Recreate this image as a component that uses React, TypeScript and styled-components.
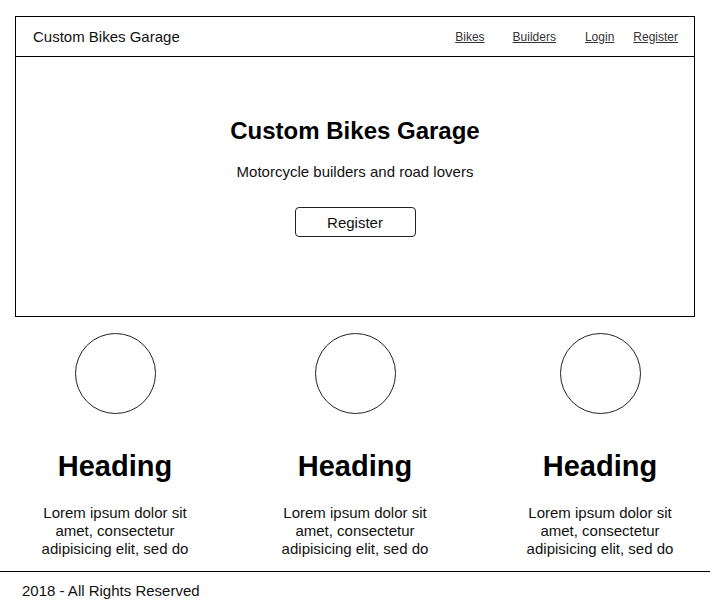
import * as React from 'react';
import styled, { createGlobalStyle } from 'styled-components';

const GlobalStyle = createGlobalStyle`
  body {
    margin: 0;
    background: #fff;
    color: #111;
    font-family: "Liberation Sans", Arial, Helvetica, sans-serif;
  }
`;

const Page = styled('div')`
  padding-top: 16px;
`;

const Frame = styled('div')`
  margin: 0 15px;
  border: 1px solid #000;
`;

const Header = styled('header')`
  height: 39px;
  border-bottom: 1px solid #000;
  display: flex;
  align-items: center;
  justify-content: space-between;
  padding: 0 16px 0 17px;
`;

const Brand = styled('div')`
  font-size: 15px;
  color: #111;
`;

const Nav = styled('nav')`
  display: flex;
  align-items: center;
`;

const NavLink = styled('a')<{ $gap: number }>`
  margin-left: ${(p) => p.$gap}px;
  font-size: 12px;
  color: #333;
  text-decoration: underline;
  cursor: pointer;
`;

const Hero = styled('section')`
  height: 259px;
  display: flex;
  flex-direction: column;
  align-items: center;
  padding-top: 60px;
  box-sizing: border-box;
`;

const HeroTitle = styled('h1')`
  margin: 0;
  font-size: 24px;
  line-height: 28px;
  font-weight: bold;
  color: #000;
`;

const HeroSubtitle = styled('p')`
  margin: 18px 0 0;
  font-size: 15px;
  line-height: 18px;
`;

const HeroButton = styled('button')`
  margin-top: 26px;
  width: 121px;
  height: 30px;
  border: 1px solid #222;
  border-radius: 4px;
  background: #fff;
  font-family: inherit;
  font-size: 15px;
  color: #111;
  cursor: pointer;
`;

const Features = styled('section')`
  display: grid;
  grid-template-columns: 230px 250px 230px;
  padding-top: 16px;
  padding-bottom: 13px;
`;

const Feature = styled('div')<{ $shift: number }>`
  display: flex;
  flex-direction: column;
  align-items: center;
  padding-left: ${(p) => p.$shift}px;
`;

const Circle = styled('div')`
  width: 79px;
  height: 79px;
  border: 1px solid #222;
  border-radius: 50%;
`;

const FeatureHeading = styled('h2')`
  margin: 35px 0 0;
  font-size: 29px;
  line-height: 34px;
  font-weight: bold;
  color: #000;
`;

const FeatureText = styled('p')`
  margin: 21px 0 0;
  max-width: 156px;
  font-size: 15px;
  line-height: 18px;
  text-align: center;
`;

const Footer = styled('footer')`
  border-top: 1px solid #000;
  padding: 10px 22px;
  font-size: 15px;
  line-height: 18px;
`;

const links = [
  { label: 'Bikes', gap: 0 },
  { label: 'Builders', gap: 28 },
  { label: 'Login', gap: 29 },
  { label: 'Register', gap: 19 },
];

const features = [{ shift: 0 }, { shift: 0 }, { shift: 10 }];

const lorem = 'Lorem ipsum dolor sit amet, consectetur adipisicing elit, sed do';

export default function App() {
  return (
    <Page>
      <GlobalStyle />
      <Frame>
        <Header>
          <Brand>Custom Bikes Garage</Brand>
          <Nav>
            {links.map((l) => (
              <NavLink key={l.label} $gap={l.gap}>
                {l.label}
              </NavLink>
            ))}
          </Nav>
        </Header>
        <Hero>
          <HeroTitle>Custom Bikes Garage</HeroTitle>
          <HeroSubtitle>Motorcycle builders and road lovers</HeroSubtitle>
          <HeroButton>Register</HeroButton>
        </Hero>
      </Frame>
      <Features>
        {features.map((f, i) => (
          <Feature key={i} $shift={f.shift}>
            <Circle />
            <FeatureHeading>Heading</FeatureHeading>
            <FeatureText>{lorem}</FeatureText>
          </Feature>
        ))}
      </Features>
      <Footer>2018 - All Rights Reserved</Footer>
    </Page>
  );
}
